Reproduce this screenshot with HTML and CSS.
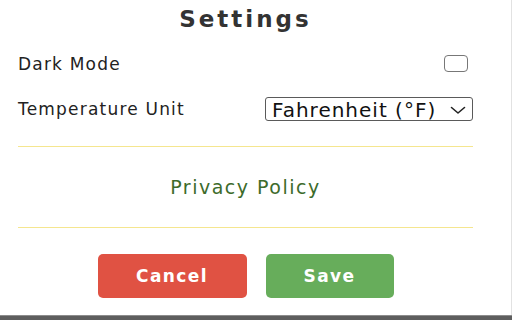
FILE: index.html
```html
<!DOCTYPE html>
<html lang="en">

<head>
    <meta charset="UTF-8">
    <meta name="viewport" content="width=device-width, initial-scale=1.0">
    <title>Settings</title>
    <link rel="stylesheet" href="styles.css">
</head>

<body>
    <section class="popup">
        <h1 class="title">Settings</h1>
        <div class="settingRow">
            <span class="settingLabel">Dark Mode</span>
            <input type="checkbox" class="darkMode">
        </div>
        <div class="settingRow">
            <span class="settingLabel">Temperature Unit</span>
            <div class="selectWrap">
                <select class="tempUnit">
                    <option value="F">Fahrenheit (°F)</option>
                    <option value="C">Celsius (°C)</option>
                </select>
                <svg class="chevron" width="16" height="9" viewBox="0 0 16 9">
                    <path d="M1.5 1.5 L8 7 L14.5 1.5" fill="none" stroke="#222" stroke-width="1.6" stroke-linecap="round" stroke-linejoin="round"/>
                </svg>
            </div>
        </div>
        <div class="privacy">
            <a href="#" class="privacyLink">Privacy Policy</a>
        </div>
        <div class="buttons">
            <button class="btn cancelBtn">Cancel</button>
            <button class="btn saveBtn">Save</button>
        </div>
    </section>
    <div class="frameBottom"></div>
</body>

</html>
```

FILE: styles.css
```css
html {
    background-color: white;
}

body {
    margin: 0;
    height: 320px;
    overflow: hidden;
    font-family: "DejaVu Sans", "Liberation Sans", sans-serif;
    color: #222;
}

.popup {
    box-sizing: border-box;
    width: 512px;
    height: 315px;
    padding: 0 38px 0 18px;
    border-right: 1px solid #e2e2e2;
    display: flex;
    flex-direction: column;
}

.title {
    margin: 4px 0 7px 0;
    font-size: 23px;
    line-height: 30px;
    letter-spacing: 3px;
    font-weight: bold;
    text-align: center;
    color: #333;
}

.settingRow {
    height: 45px;
    display: flex;
    justify-content: space-between;
    align-items: center;
}

.settingLabel {
    font-size: 17px;
    line-height: 20px;
    letter-spacing: 1.2px;
}

.darkMode {
    appearance: none;
    margin: 0 5px 0 0;
    width: 24px;
    height: 17px;
    border: 1.5px solid #777;
    border-radius: 4px;
    background-color: white;
}

.selectWrap {
    position: relative;
    display: flex;
}

.tempUnit {
    appearance: none;
    box-sizing: border-box;
    width: 208px;
    height: 24px;
    padding: 0 0 0 6px;
    border: 1px solid #5a5a5a;
    border-radius: 3px;
    background-color: white;
    font-family: "DejaVu Sans", "Liberation Sans", sans-serif;
    font-size: 20px;
    letter-spacing: 1px;
    color: #111;
}

.chevron {
    position: absolute;
    right: 7px;
    top: 9px;
    pointer-events: none;
}

.privacy {
    margin-top: 15px;
    height: 80px;
    border-top: 1px solid #f5e68f;
    border-bottom: 1px solid #f5e68f;
    display: flex;
    justify-content: center;
    align-items: center;
}

.privacyLink {
    font-size: 19px;
    letter-spacing: 1.5px;
    color: #3d6b2b;
    text-decoration: none;
}

.buttons {
    margin-top: 26px;
    display: flex;
    justify-content: center;
    gap: 19px;
}

.btn {
    height: 44px;
    border: none;
    border-radius: 5px;
    color: white;
    font-family: "DejaVu Sans", "Liberation Sans", sans-serif;
    font-size: 17px;
    font-weight: bold;
    letter-spacing: 1.4px;
    cursor: pointer;
}

.cancelBtn {
    width: 149px;
    background-color: #e05243;
}

.saveBtn {
    width: 128px;
    background-color: #67ad5b;
}

.frameBottom {
    box-sizing: border-box;
    height: 5px;
    border-top: 1px solid #8c8c8c;
    background-color: #5e5e5e;
}
```
